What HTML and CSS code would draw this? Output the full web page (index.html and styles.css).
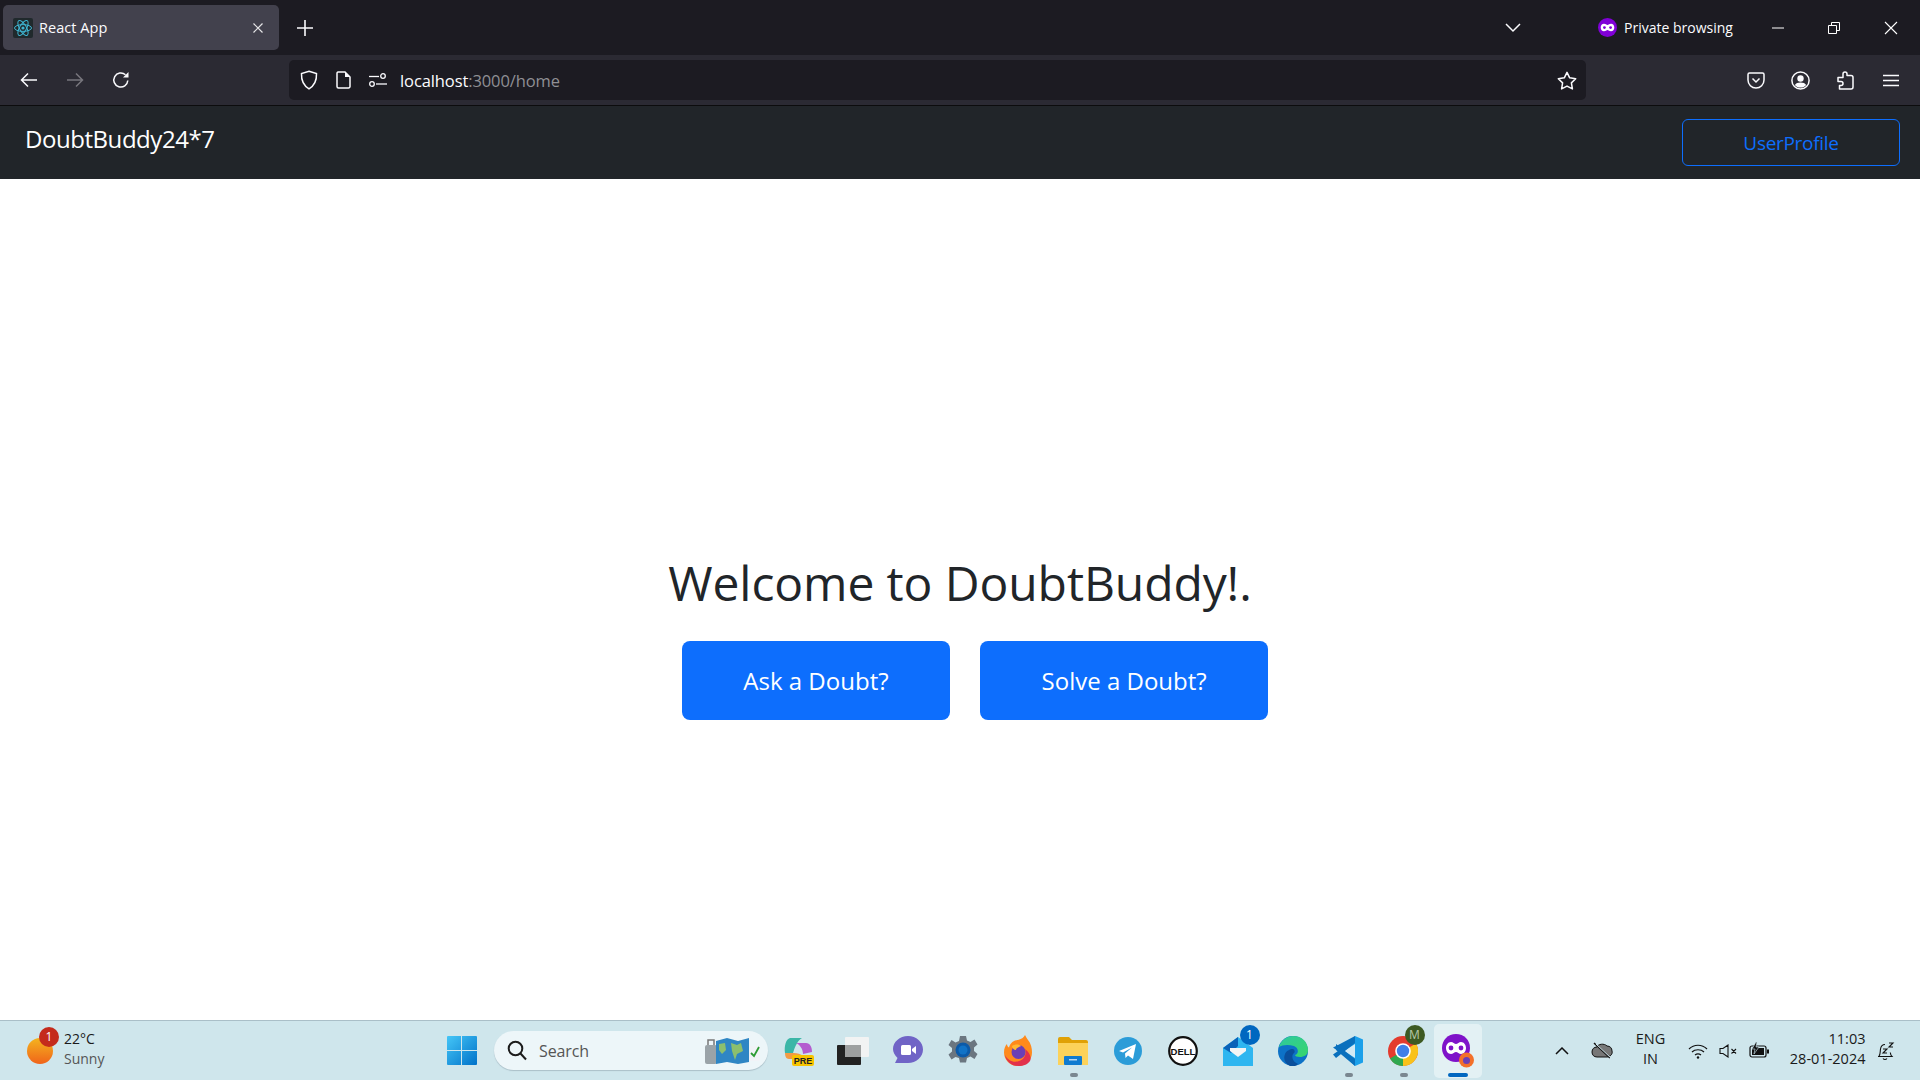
FILE: index.html
```html
<!DOCTYPE html>
<html lang="en">
  <head>
    <meta charset="UTF-8" />
    <title>React App</title>
    <link rel="stylesheet" href="styles.css">
  </head>
  <body>
    <!-- browser tab strip -->
    <div class="tabstrip">
      <div class="tab">
        <svg class="favicon" width="20" height="20" viewBox="0 0 20 20" fill="none" stroke="#3fb6d3" stroke-width="1">
          <rect width="20" height="20" rx="2" fill="#20292c" stroke="none"/>
          <ellipse cx="10" cy="10" rx="8.5" ry="3.4"/>
          <ellipse cx="10" cy="10" rx="8.5" ry="3.4" transform="rotate(60 10 10)"/>
          <ellipse cx="10" cy="10" rx="8.5" ry="3.4" transform="rotate(120 10 10)"/>
          <circle cx="10" cy="10" r="1.6" fill="#3fb6d3" stroke="none"/>
        </svg>
        <span class="tab-title">React App</span>
        <svg class="tab-close" width="12" height="12" viewBox="0 0 12 12" stroke="#e6e6e8" stroke-width="1.2"><path d="M1.5 1.5l9 9M10.5 1.5l-9 9"/></svg>
      </div>
      <svg class="new-tab" width="16" height="16" viewBox="0 0 16 16" stroke="#fbfbfe" stroke-width="1.6"><path d="M8 0v16M0 8h16"/></svg>
      <svg class="tab-list" width="16" height="10" viewBox="0 0 16 10" fill="none" stroke="#fbfbfe" stroke-width="1.5"><path d="M1 1l7 7 7-7"/></svg>
      <svg class="private-icon" width="19" height="19" viewBox="0 0 19 19">
        <circle cx="9.5" cy="9.5" r="9.5" fill="#8000d7"/>
        <path d="M6 5.8c1.6 0 2.5 1.1 3.5 1.1s1.9-1.1 3.5-1.1c2 0 3.3 1.6 3.3 3.7 0 2.1-1.3 3.7-3.3 3.7-1.6 0-2.5-1.3-3.5-1.3s-1.9 1.3-3.5 1.3c-2 0-3.3-1.6-3.3-3.7 0-2.1 1.3-3.7 3.3-3.7z" fill="#fff"/>
        <circle cx="6.4" cy="9.6" r="1.4" fill="#8000d7"/><circle cx="12.6" cy="9.6" r="1.4" fill="#8000d7"/>
      </svg>
      <span class="private-label">Private browsing</span>
      <div class="win-btns">
        <svg width="12" height="2" viewBox="0 0 12 2" stroke="#fff"><path d="M0 1h12"/></svg>
        <svg width="12" height="12" viewBox="0 0 12 12" fill="none" stroke="#fff"><path d="M.5 3.5h8v8h-8zM3.5 3.5v-3h8v8h-3"/></svg>
        <svg width="14" height="14" viewBox="0 0 14 14" stroke="#fff" stroke-width="1.1"><path d="M1 1l12 12M13 1L1 13"/></svg>
      </div>
    </div>

    <!-- browser toolbar -->
    <div class="toolbar">
      <div class="tool-btn">
        <svg width="18" height="16" viewBox="0 0 18 16" fill="none" stroke="#fbfbfe" stroke-width="1.5"><path d="M17 8H2M8 1.5L1.5 8 8 14.5"/></svg>
      </div>
      <div class="tool-btn">
        <svg width="18" height="16" viewBox="0 0 18 16" fill="none" stroke="#77767d" stroke-width="1.5"><path d="M1 8h15M10 1.5L16.5 8 10 14.5"/></svg>
      </div>
      <div class="tool-btn">
        <svg width="18" height="18" viewBox="0 0 18 18" fill="none" stroke="#fbfbfe" stroke-width="1.5"><path d="M15.8 9.5A7 7 0 1 1 13.5 3.8"/><path d="M16.5 1v5.5H11z" fill="#fbfbfe" stroke="none"/></svg>
      </div>
      <div class="urlbar">
        <svg class="url-icon" width="18" height="20" viewBox="0 0 18 20" fill="none" stroke="#fbfbfe" stroke-width="1.5"><path d="M9 1.2l7.5 2.3c.3 6.8-2.3 12.2-7.5 15.3C3.8 15.7 1.2 10.3 1.5 3.5z"/></svg>
        <svg class="url-icon" width="15" height="18" viewBox="0 0 15 18" fill="none" stroke="#fbfbfe" stroke-width="1.5"><path d="M3 1h6l5 5v9.5a1.5 1.5 0 0 1-1.5 1.5h-10A1.5 1.5 0 0 1 1 15.500v-13A1.5 1.5 0 0 1 3 1z"/><path d="M9 1v5h5z" fill="#fbfbfe" stroke="none"/></svg>
        <svg class="url-icon" width="18" height="14" viewBox="0 0 18 14" fill="none" stroke="#fbfbfe" stroke-width="1.3"><path d="M0 3.5h10"/><circle cx="14" cy="3" r="2.3"/><circle cx="3" cy="11" r="2.3"/><path d="M7 11h11"/></svg>
        <span class="url-text">localhost<span class="url-dim">:3000/home</span></span>
        <svg class="url-star" width="20" height="19" viewBox="0 0 20 19" fill="none" stroke="#fbfbfe" stroke-width="1.5" stroke-linejoin="round"><path d="M10 1.3l2.7 5.5 6 .9-4.3 4.2 1 6-5.4-2.8-5.4 2.8 1-6L1.300 7.700l6-.9z"/></svg>
      </div>
      <div class="tool-right">
        <div class="tool-btn small">
          <svg width="18" height="17" viewBox="0 0 18 17" fill="none" stroke="#fbfbfe" stroke-width="1.5"><path d="M2.5 1h13A1.5 1.5 0 0 1 17 2.5V8A8 8 0 0 1 1 8V2.5A1.5 1.5 0 0 1 2.5 1z"/><path d="M5.500 6.500L9 10l3.500-3.500"/></svg>
        </div>
        <div class="tool-btn small">
          <svg width="19" height="19" viewBox="0 0 19 19"><circle cx="9.5" cy="9.5" r="8.6" fill="none" stroke="#fbfbfe" stroke-width="1.5"/><circle cx="9.5" cy="7.5" r="3.2" fill="#fbfbfe"/><path d="M3.800 14c1-1.700 3-2.500 5.700-2.500s4.700.8 5.700 2.500c-1.300 1.600-3.400 2.600-5.700 2.600S5.100 15.600 3.800 14z" fill="#fbfbfe"/></svg>
        </div>
        <div class="tool-btn small">
          <svg width="17" height="19" viewBox="0 0 17 19" fill="none" stroke="#fbfbfe" stroke-width="1.5" stroke-linejoin="round"><path d="M6 4.500V3a2 2 0 0 1 4 0v1.500h4a2 2 0 0 1 2 2V16a2 2 0 0 1-2 2H2.500v-3.500H4a1.800 1.800 0 0 0 0-4H1V6.500h5z"/></svg>
        </div>
        <div class="tool-btn small">
          <svg width="16" height="13" viewBox="0 0 16 13" stroke="#fbfbfe" stroke-width="1.5"><path d="M0 1.500h16M0 6.500h16M0 11.500h16"/></svg>
        </div>
      </div>
    </div>

    <!-- the page itself -->
    <nav class="navbar">
      <span class="brand">DoubtBuddy24*7</span>
      <button class="btn-outline">UserProfile</button>
    </nav>

    <main class="content">
      <h1>Welcome to DoubtBuddy!.</h1>
      <div class="actions">
        <button class="btn-primary">Ask a Doubt?</button>
        <button class="btn-primary">Solve a Doubt?</button>
      </div>
    </main>

    <!-- windows taskbar -->
    <footer class="taskbar">
      <div class="weather">
        <div class="sun"><span class="sun-badge">1</span></div>
        <div class="weather-text">
          <span>22°C</span>
          <span class="weather-sub">Sunny</span>
        </div>
      </div>

      <div class="task-icon start">
        <svg width="30" height="29" viewBox="0 0 30 29"><defs><linearGradient id="win" x1="0" y1="0" x2="1" y2="1"><stop offset="0" stop-color="#45c6f7"/><stop offset="1" stop-color="#0072c9"/></linearGradient></defs><path d="M1 0h13v14H0V1a1 1 0 0 1 1-1zM15 0h14a1 1 0 0 1 1 1v13H15zM0 15h14v14H1a1 1 0 0 1-1-1zM15 15h15v13a1 1 0 0 1-1 1H15z" fill="url(#win)"/></svg>
      </div>

      <div class="searchbox">
        <svg width="20" height="21" viewBox="0 0 20 21" fill="none" stroke="#1c1c1c" stroke-width="2"><circle cx="8.5" cy="8.5" r="6.8"/><path d="M13.5 13.5l5.5 6"/></svg>
        <span class="search-label">Search</span>
        <svg class="search-art" width="58" height="30" viewBox="0 0 58 30">
          <rect x="1" y="9" width="12" height="19" rx="2" fill="#9aa3a8"/><path d="M4 9V4h6v5" fill="none" stroke="#777" stroke-width="1.5"/>
          <path d="M12 5l11-3 11 3 11-3v24l-11 2-11-2-11 2z" fill="#2f86c4"/><path d="M15 8l6-1 1 7-4 4-3-4zM27 7l6 2 4-2 2 8-6 3-2 6-3-9z" fill="#8cbf6e"/>
          <rect x="45" y="10" width="11" height="15" rx="1" fill="#f1f3f7"/><path d="M47 17l3 3 5-9" fill="none" stroke="#2d9c34" stroke-width="1.8"/>
        </svg>
      </div>

      <div class="task-icon">
        <svg width="32" height="30" viewBox="0 0 32 30"><path d="M8 2h12c-4 2-7 8-9 15H3C2 10 4 3 8 2z" fill="#3bb6a7"/><path d="M14 7h10c4 0 6 4 6 9l-9 2c0-5-3-9-7-11z" fill="#b45ccf"/><path d="M3 17h9c3 0 7 1 9 3v3H7c-3 0-4-3-4-6z" fill="#f29b45"/><rect x="10" y="19" width="22" height="11" rx="2" fill="#f8c400"/><text x="21" y="28" font-size="9" font-weight="700" fill="#222" text-anchor="middle" font-family="Liberation Sans, sans-serif">PRE</text></svg>
      </div>
      <div class="task-icon">
        <svg width="32" height="28" viewBox="0 0 32 28"><rect x="0" y="8" width="24" height="20" rx="1" fill="#222"/><rect x="8" y="0" width="24" height="20" rx="1" fill="#f2f3f3"/><rect x="8" y="8" width="16" height="12" fill="#9ea0a0"/></svg>
      </div>
      <div class="task-icon">
        <svg width="30" height="29" viewBox="0 0 30 29"><path d="M15 0c8.3 0 15 6 15 13.5S23.3 27 15 27H2l2.5-5C1.5 19 0 16 0 13 0 6 6.7 0 15 0z" fill="#7064c6"/><rect x="8" y="9" width="10" height="10" rx="1.5" fill="#fff"/><path d="M19 13l4-3v8l-4-3z" fill="#fff"/></svg>
      </div>
      <div class="task-icon">
        <svg width="30" height="32" viewBox="0 0 30 32"><path d="M12 1h6l1 4.5 3.5 1.5 4-2.500 3 5-3.500 3v3.500l3.500 3-3 5-4-2.500-3.500 1.500-1 4.500h-6l-1-4.500L7.500 22l-4 2.500-3-5L4 16.500V13L.5 10l3-5 4 2.500L11 6z" fill="#6b7680"/><circle cx="15" cy="15" r="7.5" fill="#0c5aa8"/><circle cx="15" cy="15" r="4.5" fill="#1173c7"/></svg>
      </div>
      <div class="task-icon">
        <svg width="30" height="32" viewBox="0 0 30 32"><path d="M15 31C7 31 1 25 1 17.500 1 13 2.500 10.500 4 9c0 2 1 3 2 3.500C7 8 11 5 15 5c4-1 6-3 7-5 1 2 2 3.500 3 5 3 3.500 4 8 4 12.500C29 25 23 31 15 31z" fill="#ff8a1c"/><path d="M15 31c-7 0-12-5-13-11 3 6 9 8 14 6 5-1 8-7 6-12 4 3 7 8 5 12-2 3-6 5-12 5z" fill="#e2314c"/><circle cx="15.5" cy="17" r="7" fill="#6b3fb5"/><path d="M9 11c3-2 7-2 9 0-2 1-5 2-5 4-2 0-4-2-4-4z" fill="#ffb933"/></svg>
      </div>
      <div class="task-icon running">
        <svg width="30" height="28" viewBox="0 0 30 28"><path d="M0 2a2 2 0 0 1 2-2h9l3 3h14a2 2 0 0 1 2 2v3H0z" fill="#e0a106"/><path d="M0 6h30v22H0z" fill="#fcd25a"/><rect x="6" y="19" width="18" height="9" rx="1" fill="#0f7bd0"/><rect x="11" y="22" width="8" height="1.5" fill="#fff" opacity=".7"/></svg>
      </div>
      <div class="task-icon">
        <svg width="28" height="28" viewBox="0 0 28 28"><circle cx="14" cy="14" r="14" fill="#2b9cd8"/><path d="M5 14l17-7-3 15-5-3.500-2.500 2.500-.5-4.500 7-6-9 5z" fill="#fff"/></svg>
      </div>
      <div class="task-icon">
        <svg width="30" height="30" viewBox="0 0 30 30"><circle cx="15" cy="15" r="13.8" fill="#fff" stroke="#111" stroke-width="2.2"/><text x="15" y="18.5" font-size="9.5" font-weight="700" fill="#111" text-anchor="middle" font-family="Liberation Sans, sans-serif">DELL</text></svg>
      </div>
      <div class="task-icon">
        <svg width="30" height="30" viewBox="0 0 30 30"><path d="M0 12L15 1l15 11v18H0z" fill="#2fb6f0"/><path d="M0 12L15 1v9l-7 7z" fill="#0a62b8"/><path d="M7 12h16v3l-8 6-8-6z" fill="#f4f5f5"/></svg>
        <span class="task-badge">1</span>
      </div>
      <div class="task-icon">
        <svg width="30" height="30" viewBox="0 0 30 30"><defs><linearGradient id="edge" x1="0" y1="0" x2="1" y2="1"><stop offset="0" stop-color="#2fc8a0"/><stop offset="1" stop-color="#37d66b"/></linearGradient></defs><circle cx="15" cy="15" r="15" fill="#0d72c7"/><path d="M1 11C3 4 9 0 15 0c9 0 15 6 15 14 0 5-4 7-8 7-3 0-5-1-5-2 4-1 4-7-1-9-6-2-12-1-15 1z" fill="url(#edge)"/><path d="M12 30c-5-2-7-7-5-12 1-3 5-5 8-5 2 1 2 3 1 4-3 2-2 9 4 11-2 2-5 3-8 2z" fill="#0a4f9c"/></svg>
      </div>
      <div class="task-icon running">
        <svg width="30" height="30" viewBox="0 0 30 30"><path d="M22 0l8 3.500v23L22 30 7 16z" fill="#1ba0ea"/><path d="M22 8v14L11 15z" fill="#d2e9f4"/><path d="M7 8L0 11.500 5 15 0 18.500 3 22l19-15V0z" fill="#0a70bd"/><path d="M3 8l19 15v7L3 14z" fill="#0a70bd"/></svg>
      </div>
      <div class="task-icon running">
        <svg width="30" height="30" viewBox="0 0 30 30"><circle cx="15" cy="15" r="15" fill="#e33b2e"/><path d="M15 15L2 22.500A15 15 0 0 0 15 30z" fill="#2fa84f"/><path d="M15 15V30A15 15 0 0 0 28 7.500z" fill="#f9c21a"/><circle cx="15" cy="15" r="7.8" fill="#fff"/><circle cx="15" cy="15" r="6.2" fill="#3f7fe8"/></svg>
        <span class="profile-badge">M</span>
      </div>
      <div class="task-icon active">
        <svg width="32" height="34" viewBox="0 0 32 34"><path d="M14 0c8 0 14 6 14 14s-6 14-14 14S0 22 0 14 6 0 14 0z" fill="#7f12c9"/><path d="M9 8c2 0 3.500 2 5 2s3-2 5-2c3 0 5 3 5 6s-2 6-5 6c-2 0-3.500-2-5-2s-3 2-5 2c-3 0-5-3-5-6s2-6 5-6z" fill="#fff"/><circle cx="9" cy="14" r="2.4" fill="#7f12c9"/><circle cx="19" cy="14" r="2.4" fill="#7f12c9"/><circle cx="24.5" cy="26" r="7.5" fill="#f3702a"/><circle cx="24.5" cy="26.5" r="3.5" fill="#6b3fb5"/></svg>
      </div>

      <div class="tray">
        <svg class="tray-caret" width="14" height="8" viewBox="0 0 14 8" fill="none" stroke="#111" stroke-width="1.5"><path d="M1 7l6-6 6 6"/></svg>
        <svg class="tray-cloud" width="22" height="18" viewBox="0 0 22 18"><path d="M6 5c1-3 7-4 10-1 3 0 5 2 5 5 1 3-2 6-5 6H6c-3 0-5-2-5-5s2-5 5-5z" fill="#777" stroke="#111"/><path d="M3 1l16 15" stroke="#111" stroke-width="1.5"/><path d="M5 2l15 14" stroke="#d0e7ee" stroke-width="1"/></svg>
        <div class="lang"><span>ENG</span><span>IN</span></div>
        <div class="status-icons">
          <svg width="20" height="16" viewBox="0 0 20 16" fill="none" stroke="#111" stroke-width="1.2"><path d="M1 6c5-5 13-5 18 0M4 9c3-3 9-3 12 0M7 12c2-1.500 4-1.500 6 0"/><circle cx="10" cy="14.5" r="1.2" fill="#111" stroke="none"/></svg>
          <svg width="19" height="14" viewBox="0 0 19 14" fill="none" stroke="#111" stroke-width="1.1"><path d="M1 4.5h3L9 1v12L4 9.500H1zM12.500 5l4.500 4.500M17 5l-4.500 4.500"/></svg>
          <svg width="21" height="17" viewBox="0 0 21 17"><rect x="1" y="4" width="16" height="11" rx="2" fill="none" stroke="#111" stroke-width="1.2"/><rect x="3" y="6" width="12" height="7" fill="#111"/><rect x="18" y="7.5" width="2" height="4" fill="#111"/><path d="M7 0L3 7h3l-1 5 5-7H7l1-5z" fill="#111" stroke="#d0e7ee" stroke-width=".6"/></svg>
        </div>
        <div class="clock"><span>11:03</span><span>28-01-2024</span></div>
        <svg class="tray-bell" width="18" height="20" viewBox="0 0 18 20" fill="none" stroke="#111" stroke-width="1.1"><path d="M2 15c1.500-1.500 1-4 1.500-7C4 5 6 3.500 8 3.500M1 15.500h14c-1-1-1.500-2-1.700-4M6 17.500a2.500 2.500 0 0 0 4 0M6 8h4l-4 4h4M12 2h4l-4 4h4"/></svg>
      </div>
    </footer>
  </body>
</html>
```

FILE: styles.css
```css
* {
  box-sizing: border-box;
}

body {
  margin: 0;
  height: 1080px;
  display: flex;
  flex-direction: column;
  overflow: hidden;
  font-family: "Open Sans", "Noto Sans", sans-serif;
  background-color: #fff;
}

/* tab strip */
.tabstrip {
  height: 55px;
  flex-shrink: 0;
  display: flex;
  align-items: center;
  padding-left: 3px;
  background-color: #1c1b22;
  color: #fbfbfe;
}

.tab {
  width: 276px;
  height: 45px;
  display: flex;
  align-items: center;
  padding: 0 15px 0 10px;
  border-radius: 5px;
  background-color: #42414d;
  font-size: 14.5px;
}

.tab-title {
  margin-left: 6px;
  flex: 1;
  letter-spacing: 0.05px;
}

.new-tab {
  margin-left: 18px;
}

.tab-list {
  margin-left: 1192px;
}

.private-icon {
  margin-left: 77px;
}

.private-label {
  margin-left: 7px;
  font-size: 14px;
}

.win-btns {
  margin-left: auto;
  display: flex;
  align-items: center;
  gap: 44px;
  padding-right: 22px;
}

/* toolbar */
.toolbar {
  height: 51px;
  flex-shrink: 0;
  display: flex;
  align-items: center;
  padding-left: 6px;
  background-color: #2b2a33;
  border-bottom: 1px solid #0c0c0d;
}

.tool-btn {
  width: 46px;
  display: flex;
  justify-content: center;
  align-items: center;
}

.tool-btn.small {
  width: 45px;
}

.urlbar {
  width: 1297px;
  height: 40px;
  margin-left: 145px;
  display: flex;
  align-items: center;
  padding-left: 11px;
  border-radius: 5px;
  background-color: #1c1b22;
  color: #fbfbfe;
}

.url-icon {
  margin-right: 18px;
}

.url-text {
  margin-left: -5px;
  font-size: 16.5px;
  letter-spacing: -0.1px;
}

.url-dim {
  color: #8f8f94;
}

.url-star {
  margin-left: auto;
  margin-right: 9px;
}

.tool-right {
  margin-left: auto;
  display: flex;
  padding-right: 7px;
}

/* page navbar */
.navbar {
  height: 73px;
  flex-shrink: 0;
  display: flex;
  justify-content: space-between;
  align-items: flex-start;
  padding: 13px 20px 0 25px;
  background-color: #212529;
}

.brand {
  margin-top: 2px;
  font-size: 24px;
  line-height: 36px;
  letter-spacing: -0.45px;
  color: #fff;
}

.btn-outline {
  width: 218px;
  height: 47px;
  font-family: inherit;
  font-size: 19px;
  letter-spacing: -0.3px;
  color: #0d6efd;
  background: transparent;
  border: 1.5px solid #0d6efd;
  border-radius: 6px;
}

/* main content */
.content {
  flex: 1;
  display: flex;
  flex-direction: column;
  align-items: center;
  padding-top: 375px;
}

h1 {
  margin: 0 0 29px;
  font-size: 48px;
  font-weight: 400;
  line-height: 58px;
  letter-spacing: -0.1px;
  color: #212529;
}

.actions {
  display: flex;
}

.btn-primary {
  height: 79px;
  margin-left: 30px;
  padding: 0 61.5px;
  font-family: inherit;
  font-size: 24px;
  color: #fff;
  background-color: #0d6efd;
  border: none;
  border-radius: 8px;
}

/* taskbar */
.taskbar {
  height: 60px;
  flex-shrink: 0;
  display: flex;
  align-items: center;
  background-color: #cfe6ec;
  border-top: 1px solid #aabfc8;
}

.weather {
  width: 434px;
  display: flex;
  align-items: center;
  padding-left: 27px;
  font-size: 14px;
  color: #1a1a1a;
}

.sun {
  position: relative;
  width: 26px;
  height: 26px;
  border-radius: 50%;
  background: linear-gradient(#f4b41f, #f0641a);
}

.sun-badge {
  position: absolute;
  top: -11px;
  left: 12px;
  width: 20px;
  height: 20px;
  border-radius: 50%;
  background-color: #c42b1c;
  color: #fff;
  font-size: 12px;
  line-height: 20px;
  text-align: center;
}

.weather-text {
  margin: -3px 0 0 11px;
  display: flex;
  flex-direction: column;
  line-height: 20px;
}

.weather-sub {
  color: #555;
}

.task-icon {
  position: relative;
  width: 55px;
  height: 59px;
  flex-shrink: 0;
  display: flex;
  justify-content: center;
  align-items: center;
}

.task-icon.running::after,
.task-icon.active::after {
  content: "";
  position: absolute;
  bottom: 3px;
  left: 24px;
  width: 8px;
  height: 4px;
  border-radius: 2px;
  background-color: #7a8790;
}

.task-icon.active {
  width: 48px;
  height: 54px;
  margin-left: 3px;
  border-radius: 5px;
  background-color: #e3f1f4;
}

.task-icon.active::after {
  left: 14px;
  bottom: 1px;
  width: 20px;
  background-color: #0067c0;
}

.task-badge,
.profile-badge {
  position: absolute;
  top: 4px;
  left: 29px;
  width: 20px;
  height: 20px;
  border-radius: 50%;
  background-color: #0067c0;
  color: #fff;
  font-size: 12px;
  line-height: 20px;
  text-align: center;
}

.profile-badge {
  background-color: #3d5a22;
  color: #b7c8a8;
}

.searchbox {
  width: 274px;
  height: 39px;
  margin: 0 2.5px 0 5px;
  flex-shrink: 0;
  display: flex;
  align-items: center;
  padding: 0 6px 0 13px;
  border-radius: 20px;
  background-color: #edf6f9;
  box-shadow: 0 1px 1px #aabfc8;
}

.search-label {
  margin-left: 12px;
  font-size: 16px;
  letter-spacing: -0.1px;
  color: #555;
}

.search-art {
  margin-left: auto;
}

.tray {
  flex: 1;
  display: flex;
  align-items: center;
  font-size: 14.5px;
  color: #1a1a1a;
}

.tray-caret {
  margin-left: 73px;
}

.tray-cloud {
  margin-left: 22px;
}

.lang {
  width: 40px;
  margin: -3px 0 0 18px;
  display: flex;
  flex-direction: column;
  align-items: center;
  line-height: 20px;
}

.status-icons {
  margin-left: 17px;
  display: flex;
  align-items: center;
  gap: 11px;
}

.clock {
  width: 96px;
  margin-top: -3px;
  display: flex;
  flex-direction: column;
  align-items: flex-end;
  line-height: 20px;
}

.tray-bell {
  margin-left: 11px;
}
```
